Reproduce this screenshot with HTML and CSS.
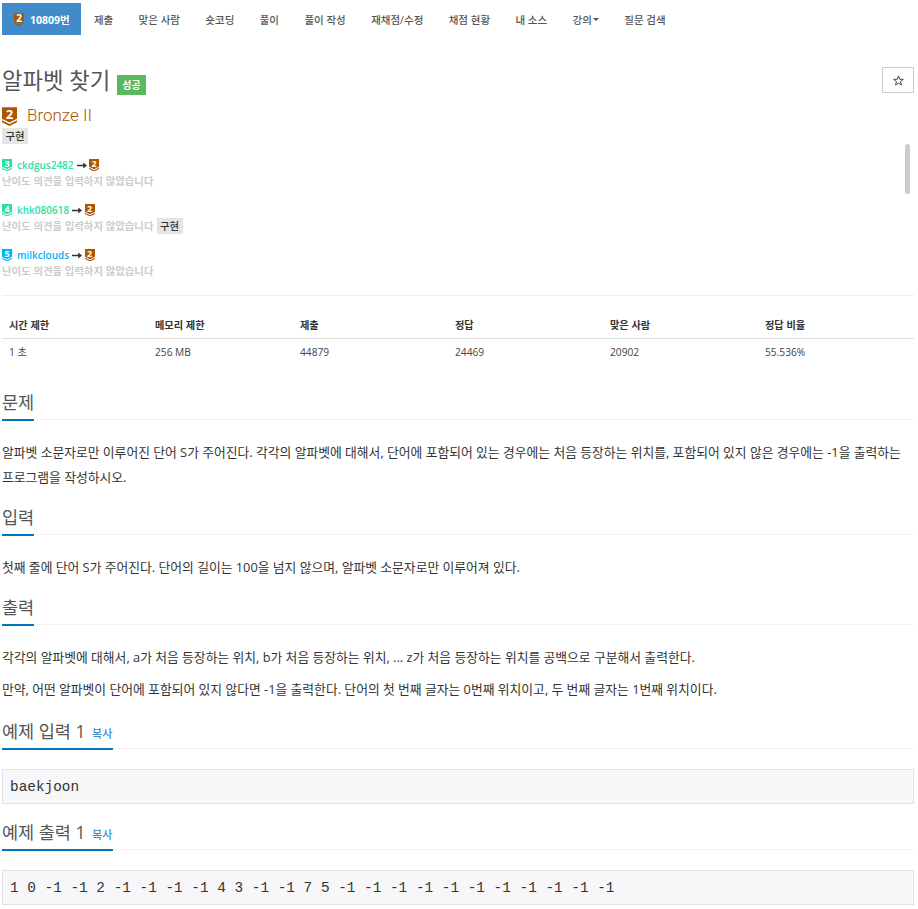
FILE: index.html
```html
<!DOCTYPE html>
<html lang="ko">
<head>
<meta charset="utf-8">
<title>알파벳 찾기</title>
<link rel="stylesheet" href="styles.css">
</head>
<body>
<svg class="defs" width="0" height="0" aria-hidden="true">
  <symbol id="shield" viewBox="0 0 16 20">
    <path d="M0 0H16V12.5L8 16.5L0 12.5Z"/>
    <path d="M0 14L8 18L16 14V16L8 20L0 16Z"/>
  </symbol>
</svg>
<nav class="nav">
  <a class="nav-item active"><svg class="tier tier-nav bronze"><use href="#shield"/></svg><span class="tier-num num-nav">2</span>10809번</a>
  <a class="nav-item">제출</a>
  <a class="nav-item">맞은 사람</a>
  <a class="nav-item">숏코딩</a>
  <a class="nav-item">풀이</a>
  <a class="nav-item">풀이 작성</a>
  <a class="nav-item">재채점/수정</a>
  <a class="nav-item">채점 현황</a>
  <a class="nav-item">내 소스</a>
  <a class="nav-item">강의<span class="caret"></span></a>
  <a class="nav-item">질문 검색</a>
</nav>
<main class="content">
  <div class="title-row">
    <h1 class="title">알파벳 찾기</h1>
    <span class="badge">성공</span>
    <button class="star" aria-label="star"><svg class="star-icon" viewBox="0 0 12 12"><path d="M6 1L7.4 4.6L11.2 4.8L8.2 7.2L9.2 10.9L6 8.8L2.8 10.9L3.8 7.2L0.8 4.8L4.6 4.6Z"/></svg></button>
  </div>
  <div class="tier-row">
    <span class="tier-wrap"><svg class="tier tier-lg bronze"><use href="#shield"/></svg><span class="tier-num num-lg">2</span></span>
    <span class="tier-name">Bronze II</span>
  </div>
  <div class="tag-row"><span class="tag">구현</span></div>
  <div class="opinions">
    <div class="opinion">
      <div class="op-head"><span class="tier-wrap"><svg class="tier tier-sm plat"><use href="#shield"/></svg><span class="tier-num num-sm">3</span></span><span class="user plat-text">ckdgus2482</span><svg class="arrow" viewBox="0 0 12 8"><path d="M0 3H7.5V0.5L12 4L7.5 7.5V5H0Z"/></svg><span class="tier-wrap"><svg class="tier tier-sm bronze"><use href="#shield"/></svg><span class="tier-num num-sm">2</span></span></div>
      <div class="op-text">난이도 의견을 입력하지 않았습니다</div>
    </div>
    <div class="opinion">
      <div class="op-head"><span class="tier-wrap"><svg class="tier tier-sm plat"><use href="#shield"/></svg><span class="tier-num num-sm">4</span></span><span class="user plat-text">khk080618</span><svg class="arrow" viewBox="0 0 12 8"><path d="M0 3H7.5V0.5L12 4L7.5 7.5V5H0Z"/></svg><span class="tier-wrap"><svg class="tier tier-sm bronze"><use href="#shield"/></svg><span class="tier-num num-sm">2</span></span></div>
      <div class="op-text">난이도 의견을 입력하지 않았습니다<span class="tag tag-inline">구현</span></div>
    </div>
    <div class="opinion">
      <div class="op-head"><span class="tier-wrap"><svg class="tier tier-sm dia"><use href="#shield"/></svg><span class="tier-num num-sm">5</span></span><span class="user dia-text">milkclouds</span><svg class="arrow" viewBox="0 0 12 8"><path d="M0 3H7.5V0.5L12 4L7.5 7.5V5H0Z"/></svg><span class="tier-wrap"><svg class="tier tier-sm bronze"><use href="#shield"/></svg><span class="tier-num num-sm">2</span></span></div>
      <div class="op-text">난이도 의견을 입력하지 않았습니다</div>
    </div>
    <div class="scrollbar"></div>
  </div>
  <hr class="rule">
  <table class="info">
    <thead>
      <tr><th class="c1">시간 제한</th><th class="c2">메모리 제한</th><th class="c3">제출</th><th class="c4">정답</th><th class="c5">맞은 사람</th><th class="c6">정답 비율</th></tr>
    </thead>
    <tbody>
      <tr><td>1 초</td><td>256 MB</td><td>44879</td><td>24469</td><td>20902</td><td>55.536%</td></tr>
    </tbody>
  </table>
  <section class="section s-problem">
    <div class="headline"><h2>문제</h2></div>
    <p>알파벳 소문자로만 이루어진 단어 S가 주어진다. 각각의 알파벳에 대해서, 단어에 포함되어 있는 경우에는 처음 등장하는 위치를, 포함되어 있지 않은 경우에는 -1을 출력하는 프로그램을 작성하시오.</p>
  </section>
  <section class="section">
    <div class="headline"><h2>입력</h2></div>
    <p>첫째 줄에 단어 S가 주어진다. 단어의 길이는 100을 넘지 않으며, 알파벳 소문자로만 이루어져 있다.</p>
  </section>
  <section class="section">
    <div class="headline"><h2>출력</h2></div>
    <p>각각의 알파벳에 대해서, a가 처음 등장하는 위치, b가 처음 등장하는 위치, ... z가 처음 등장하는 위치를 공백으로 구분해서 출력한다.</p>
    <p>만약, 어떤 알파벳이 단어에 포함되어 있지 않다면 -1을 출력한다. 단어의 첫 번째 글자는 0번째 위치이고, 두 번째 글자는 1번째 위치이다.</p>
  </section>
  <section class="section s-sample">
    <div class="headline"><h2>예제 입력 1 <a class="copy">복사</a></h2></div>
    <pre class="sample">baekjoon</pre>
  </section>
  <section class="section s-sample">
    <div class="headline"><h2>예제 출력 1 <a class="copy">복사</a></h2></div>
    <pre class="sample">1 0 -1 -1 2 -1 -1 -1 -1 4 3 -1 -1 7 5 -1 -1 -1 -1 -1 -1 -1 -1 -1 -1 -1</pre>
  </section>
</main>
</body>
</html>
```

FILE: styles.css
```css
* { box-sizing: border-box; }
html, body { margin: 0; padding: 0; height: 909px; overflow: hidden; background: #fff; }
body {
  font-family: "Open Sans", "Noto Sans CJK KR", sans-serif;
  font-size: 12px;
  color: #333;
}
.defs { position: absolute; }

.nav { display: flex; height: 32px; margin: 3px 0 0 2px; }
.nav-item {
  display: flex; align-items: center; padding: 0 12.7px;
  font-size: 10.5px; font-weight: 500; color: #555; position: relative; white-space: nowrap;
}
.nav-item.active { background: #428bca; color: #fff; font-weight: 700; padding: 0 11.5px 0 12px; }
.caret {
  display: inline-block; margin-left: 1px; width: 0; height: 0;
  border-left: 3px solid transparent; border-right: 3px solid transparent; border-top: 3px solid #555;
}

.tier { display: block; }
.bronze { fill: #ad5600; }
.plat { fill: #27e2a4; }
.dia { fill: #00b4fc; }
.tier-nav { width: 10px; height: 13px; margin: 1px 6px 0 0; }
.tier-num { position: absolute; color: #fff; font-weight: 700; text-align: center; font-family: "Open Sans", sans-serif; }
.num-nav { left: 12px; width: 10px; top: 10px; font-size: 10px; line-height: 11px; }

.content { padding: 0 4px 0 2px; }

.title-row { display: flex; align-items: flex-start; height: 43px; margin-top: 29px; position: relative; }
.title { margin: 0; font-size: 22.3px; font-weight: 400; line-height: 33px; color: #555; }
.badge {
  margin: 11px 0 0 7px; height: 20px; padding: 0 5px; background: #5cb85c; color: #fff;
  font-size: 10px; font-weight: 700; line-height: 20px;
}
.star {
  display: flex; align-items: center; justify-content: center;
  margin-left: auto; width: 32px; height: 26px; margin-top: 3px; padding: 0;
  background: #fff; border: 1px solid #ccc;
}
.star-icon { width: 11px; height: 11px; fill: none; stroke: #333; stroke-width: 1; }

.tier-row { display: flex; align-items: center; height: 19px; }
.tier-wrap { position: relative; display: inline-block; flex: none; }
.tier-lg { width: 15px; height: 19px; }
.num-lg { left: 0; width: 15px; top: 0; font-size: 13px; line-height: 15px; }
.tier-name { margin: 0 0 3px 10px; font-size: 17px; line-height: 19px; color: #ad5600; font-family: "Roboto", sans-serif; font-weight: 300; }

.tag-row { margin-top: 1px; height: 16px; }
.tag {
  display: inline-block; height: 16px; line-height: 16px; padding: 0 3.5px;
  background: #e5e5e5; color: #333; font-size: 10.4px; font-weight: 500;
}

.opinions { position: relative; height: 152px; padding-top: 14px; }
.opinion { height: 45px; }
.op-head { display: flex; align-items: center; height: 16px; font-size: 10px; font-weight: 600; }
.tier-sm { width: 10px; height: 12.5px; }
.num-sm { left: 0; width: 10px; top: 0; font-size: 9px; line-height: 9.5px; }
.user { margin-left: 5px; }
.plat-text { color: #27e2a4; }
.dia-text { color: #00b4fc; }
.arrow { width: 10px; height: 7px; margin: 0 2.5px 0 3px; fill: #333; }
.op-text { display: flex; align-items: center; height: 15px; font-size: 10.4px; font-weight: 700; color: #ccc; }
.tag-inline { margin-left: 3px; }
.scrollbar { position: absolute; right: 4px; top: 1px; width: 5px; height: 50px; border-radius: 3px; background: #ccc; }

.rule { margin: 0; border: 0; border-top: 1px solid #eee; }

.info { width: 912px; border-collapse: collapse; margin-top: 16px; table-layout: fixed; font-size: 10.2px; }
.info th { height: 26px; padding: 0 7px; text-align: left; font-weight: 700; color: #333; border-bottom: 1px solid #ddd; }
.info td { height: 27px; padding: 0 7px; color: #444; }
.c1 { width: 146px; } .c2 { width: 145px; } .c3, .c4, .c5 { width: 155px; } .c6 { width: 156px; }

.s-problem { margin-top: 27px; }
.headline { border-bottom: 1px dotted #e5e5e5; height: 28px; }
.headline h2 {
  display: inline-block; margin: 0; height: 29px; line-height: 20px; font-size: 17.5px; font-weight: 400; color: #555;
  border-bottom: 2px solid #0076c0; white-space: nowrap;
}
.s-sample h2 { padding-right: 1px; }
.section p { margin: 0 0 17px; line-height: 25px; font-size: 12.8px; color: #333; }
.section .headline + p { margin-top: 20px; }
.section p + p { margin-top: -10px; }
.copy { font-size: 11px; font-weight: 500; color: #428bca; margin-left: 2px; }

.s-sample { margin-top: 19px; }
.s-sample + .s-sample { margin-top: 0; }
.sample {
  margin: 20px 0 18px; height: 35px; padding: 0 7px; border: 1px solid #e1e1e8; background: #f7f7f9;
  font-family: "Liberation Mono", monospace; font-size: 14.4px; line-height: 34px; color: #333; overflow: hidden;
}
```
